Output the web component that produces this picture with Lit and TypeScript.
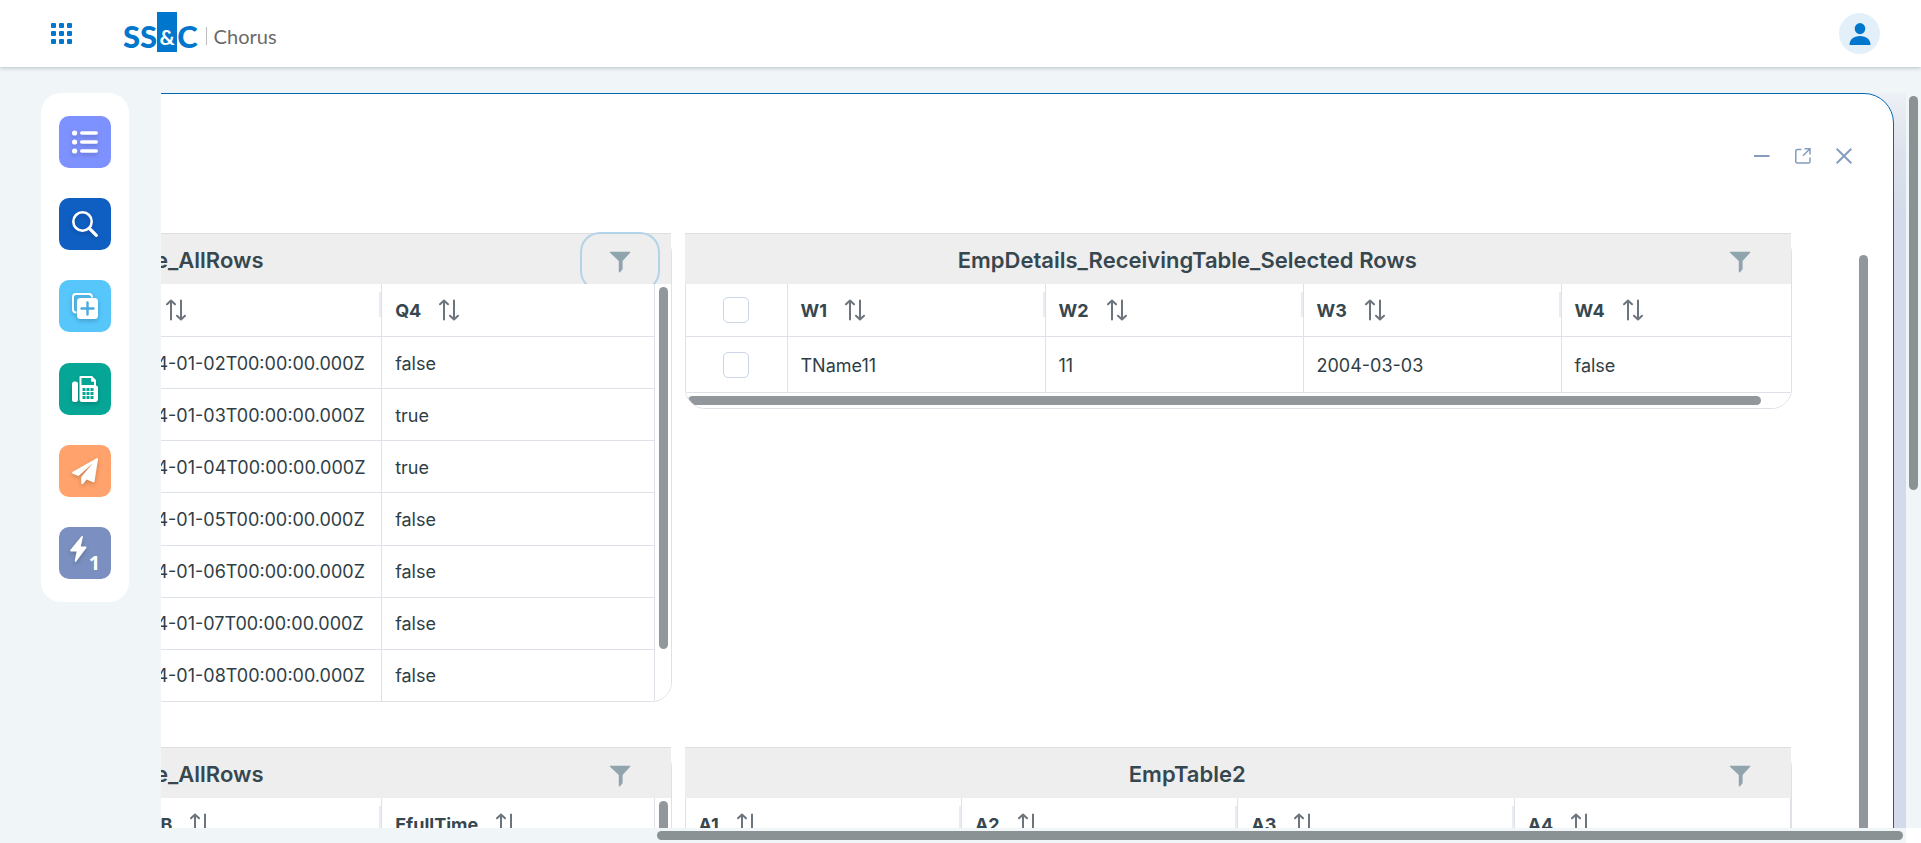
import { LitElement, html, svg, css, nothing } from "lit";
import { customElement, property } from "lit/decorators.js";

interface GridData {
  title: string;
  columns: string[];
  rows: string[][];
  selectable?: boolean;
  focused?: boolean;
  vertical?: boolean;
  horizontal?: boolean;
  offset?: boolean;
}

const stamp = (day: number) => `2004-01-0${day}T00:00:00.000Z`;

const GRIDS: GridData[] = [
  {
    title: "Table_AllRows",
    columns: ["Q1", "Q2", "Q3", "Q4"],
    rows: [
      ["Name2", "2", stamp(2), "false"],
      ["Name3", "3", stamp(3), "true"],
      ["Name4", "4", stamp(4), "true"],
      ["Name5", "5", stamp(5), "false"],
      ["Name6", "6", stamp(6), "false"],
      ["Name7", "7", stamp(7), "false"],
      ["Name8", "8", stamp(8), "false"],
    ],
    focused: true,
    vertical: true,
    offset: true,
  },
  {
    title: "EmpDetails_ReceivingTable_Selected Rows",
    columns: ["W1", "W2", "W3", "W4"],
    rows: [["TName11", "11", "2004-03-03", "false"]],
    selectable: true,
    horizontal: true,
  },
  {
    title: "Table_AllRows",
    columns: ["EName", "EId", "EDOB", "EfullTime"],
    rows: [],
    vertical: true,
    offset: true,
  },
  {
    title: "EmpTable2",
    columns: ["A1", "A2", "A3", "A4"],
    rows: [],
  },
];

@customElement("data-grid")
export class DataGrid extends LitElement {
  @property({ attribute: false }) data!: GridData;

  static styles = css`
    :host {
      display: block;
      min-width: 0;
    }
    .card {
      border: 1px solid #dfe1e6;
      border-radius: 20px;
      box-sizing: border-box;
    }
    .bar {
      display: grid;
      grid-template-columns: minmax(0, 1fr) auto;
      align-items: start;
      height: 50px;
      margin: -1px 0 0 -1px;
      border-top: 1px solid #dcdee0;
      background: #eee;
    }
    .title {
      margin: 0;
      text-align: center;
      font-size: 22px;
      font-weight: 600;
      line-height: 52px;
      white-space: nowrap;
      color: #37474f;
    }
    .title.offset {
      display: flex;
      justify-content: flex-end;
      padding-right: 306px;
    }
    .filter {
      display: grid;
      place-items: center;
      width: 76px;
      height: 55px;
      margin: 0 13px 0 12px;
      padding: 0;
      border: 0;
      border-radius: 18px;
      background: none;
    }
    .filter.focused {
      box-shadow: 0 0 0 2px #b2d3e8;
    }
    .scroll {
      position: relative;
      display: flex;
      overflow: hidden;
      background: #fff;
      border-radius: 0 0 19px 19px;
    }
    .scroll.tall {
      height: 417px;
    }
    .scroll.stacked {
      flex-direction: column;
    }
    table {
      flex: 1;
      align-self: flex-start;
      table-layout: fixed;
      width: 100%;
      border-spacing: 0;
      font-size: 18px;
      color: #2f3e46;
    }
    .tall.filled table {
      height: 418px;
    }
    .stacked table {
      flex: none;
      width: 1134px;
    }
    th,
    td {
      box-sizing: border-box;
      height: 52px;
      padding: 0 13px;
      border: 0 solid #dee1e7;
      border-width: 0 1px 1px 0;
      text-align: left;
      white-space: nowrap;
    }
    td {
      padding-top: 1px;
    }
    .stacked td {
      height: 56px;
    }
    th {
      height: 53px;
      padding-right: 0;
      color: #37474f;
      font-weight: 700;
    }
    .pick {
      width: 102px;
      padding: 0;
      text-align: center;
    }
    .head {
      display: flex;
      align-items: center;
    }
    .sort {
      display: flex;
      margin-left: 18px;
      padding: 0;
      border: 0;
      background: none;
    }
    .grip {
      width: 2px;
      height: 25px;
      margin: -12px 0 0 auto;
      background: #e9edf3;
    }
    th:last-child .grip {
      display: none;
    }
    input {
      appearance: none;
      display: block;
      box-sizing: border-box;
      width: 26px;
      height: 26px;
      margin: 0 auto;
      border: 1px solid #ccd5e8;
      border-radius: 5px;
      background: #fff;
    }
    .vtrack {
      flex: none;
      width: 9px;
      padding: 3px 3px 0 4px;
    }
    .vthumb {
      height: 362px;
      border-radius: 5px;
      background: #91979b;
    }
    .htrack {
      padding: 3px 2px;
    }
    .hthumb {
      width: 1073px;
      height: 9px;
      border-radius: 5px;
      background: #91979b;
    }
  `;

  render() {
    const d = this.data;
    const scroll = [
      "scroll",
      d.vertical || !d.rows.length ? "tall" : "",
      d.rows.length ? "filled" : "",
      d.horizontal ? "stacked" : "",
    ].join(" ");
    return html`<section class="card">
      <header class="bar">
        <h2 class="title ${d.offset ? "offset" : ""}">${d.title}</h2>
        <button class="filter ${d.focused ? "focused" : ""}" aria-label="Filter">
          <svg width="22" height="22" viewBox="0 0 22 22" fill="#90a4ae">
            <path d="M1.4 0.8h19.4c.5 0 .7.5.3.9L13.6 10v8.2l-2.6 3c-.4.4-1.2.2-1.2-.4V10L1 1.7c-.4-.4-.1-.9.4-.9z" />
          </svg>
        </button>
      </header>
      <div class=${scroll}>
        <table>
          <thead>
            <tr>
              ${d.selectable
                ? html`<th class="pick"><input type="checkbox" aria-label="Select all rows" /></th>`
                : nothing}
              ${d.columns.map(
                (c) => html`<th>
                  <div class="head">
                    ${c}
                    <button class="sort" aria-label="Sort by ${c}">
                      <svg width="20" height="22" viewBox="0 0 20 22" fill="none" stroke="#6c757d" stroke-width="2" stroke-linecap="round" stroke-linejoin="round">
                        <path d="M5 20.5V1.8M1 5.2L5 1.5l4 3.7M15 1.5v18.7M11 16.8l4 3.7 4-3.7" />
                      </svg>
                    </button>
                    <span class="grip"></span>
                  </div>
                </th>`
              )}
            </tr>
          </thead>
          <tbody>
            ${d.rows.map(
              (r) => html`<tr>
                ${d.selectable
                  ? html`<td class="pick"><input type="checkbox" aria-label="Select ${r[0]}" /></td>`
                  : nothing}
                ${r.map((v) => html`<td>${v}</td>`)}
              </tr>`
            )}
          </tbody>
        </table>
        ${d.vertical ? html`<div class="vtrack"><div class="vthumb"></div></div>` : nothing}
        ${d.horizontal ? html`<div class="htrack"><div class="hthumb"></div></div>` : nothing}
      </div>
    </section>`;
  }
}

const TOOLS = [
  {
    label: "Work list",
    tone: "list",
    icon: svg`<g fill="#fff"><circle cx="2.6" cy="4" r="2.6"/><circle cx="2.6" cy="13" r="2.6"/><circle cx="2.6" cy="22" r="2.6"/><rect x="8" y="2.2" width="18" height="3.6" rx="1.8"/><rect x="8" y="11.2" width="18" height="3.6" rx="1.8"/><rect x="8" y="20.2" width="18" height="3.6" rx="1.8"/></g>`,
  },
  {
    label: "Search",
    tone: "search",
    icon: svg`<g fill="none" stroke="#fff" stroke-width="2.6" stroke-linecap="round"><circle cx="10.5" cy="10.5" r="9.2"/><path d="M17.5 17.5l6.8 6.8" stroke-width="3.2"/></g>`,
  },
  {
    label: "Create",
    tone: "create",
    icon: svg`<path d="M4.5 19.5C2 19.5 1 18.3 1 16.5V4C1 2 2 1 4 1h13c2 0 3 1 3 3.5" fill="none" stroke="#fff" stroke-width="2"/><path d="M3 17.5V4.5C3 3.5 3.5 3 4.5 3H18.500L18.500 8 8 18z" fill="#52b2e4"/><rect x="5" y="5" width="21" height="21" rx="3.5" fill="#fff"/><path d="M15.5 9.500v12M9.500 15.500h12" stroke="#4ba9dd" stroke-width="2.400" stroke-linecap="round"/>`,
  },
  {
    label: "Fax",
    tone: "fax",
    icon: svg`<rect x="0" y="5.500" width="6" height="20.500" rx="2.500" fill="#fff"/><path d="M7.500 0.800C7.500 0.300 7.800 0 8.300 0H20l4 4v5.500c1.300.300 2 1.200 2 2.500v11c0 2-1 3-3 3H10c-1.700 0-2.500-1-2.500-2.500z" fill="#fff"/><path d="M9.500 2h9.500v2.500c0 .800.500 1.200 1.200 1.200H22V9H9.500z" fill="#06a697"/><g fill="#06a697"><rect x="10.500" y="12" width="3" height="3"/><rect x="14.500" y="12" width="3" height="3"/><rect x="18.500" y="12" width="3" height="3"/><rect x="10.500" y="16" width="3" height="3"/><rect x="14.500" y="16" width="3" height="3"/><rect x="18.500" y="16" width="3" height="3"/><rect x="10.500" y="20" width="3" height="3"/><rect x="14.500" y="20" width="3" height="3"/><rect x="18.500" y="20" width="3" height="3"/></g>`,
  },
  {
    label: "Send",
    tone: "send",
    icon: svg`<path d="M24.700.2L.7 13.800c-.9.500-.9 1.500 0 1.900l5.800 2.300L20.800 5.200 9.200 19v6c0 1.200 1.300 1.500 2 .7l3.400-4.100 6.500 2.700c.7.300 1.300-.1 1.400-.8L26 1.300c.1-.9-.5-1.500-1.300-1.100z" fill="#fff"/>`,
  },
];

@customElement("app-root")
export class AppRoot extends LitElement {
  static styles = css`
    :host {
      display: grid;
      grid-template-rows: 67px 1fr;
      height: 100vh;
      overflow: hidden;
      background: #f0f5f8;
      font-family: Inter, "Open Sans", sans-serif;
    }
    .top {
      z-index: 1;
      display: flex;
      align-items: center;
      padding: 0 41px 0 51px;
      background: #fff;
      box-shadow: 0 1px 4px rgba(60, 75, 90, 0.3);
    }
    button {
      padding: 0;
      border: 0;
      background: none;
    }
    .apps,
    .apps svg {
      display: block;
    }
    .brand {
      display: flex;
      align-items: center;
      margin-left: 51px;
      height: 67px;
      font-family: Lato, sans-serif;
      color: #0077cc;
      text-decoration: none;
    }
    .mark {
      display: flex;
      font-size: 31px;
      font-weight: 900;
      line-height: 49px;
      height: 40px;
      margin-bottom: 3px;
    }
    .amp {
      width: 20px;
      background: #0077cc;
      color: #fff;
      font-size: 21px;
      font-weight: 700;
      line-height: 49px;
      text-align: center;
    }
    .product {
      margin: 5px 0 0 8px;
      padding-left: 7px;
      border-left: 1px solid #bbb;
      font-size: 20px;
      line-height: 18px;
      color: #6a6a6a;
    }
    .user {
      display: grid;
      place-items: center;
      width: 41px;
      height: 41px;
      margin-left: auto;
      border-radius: 50%;
      background: #e3f0f9;
    }
    .body {
      display: grid;
      grid-template-columns: 161px minmax(0, 1fr) 15px;
      grid-template-rows: minmax(0, 1fr) 15px;
      padding-top: 26px;
      min-height: 0;
    }
    .tools {
      display: flex;
      flex-direction: column;
      justify-content: space-between;
      align-self: start;
      align-items: center;
      box-sizing: border-box;
      width: 88px;
      min-height: 509px;
      margin-left: 41px;
      padding: 23px 0;
      border-radius: 20px;
      background: #fff;
    }
    .tool {
      display: grid;
      place-items: center;
      width: 52px;
      height: 52px;
      border-radius: 10px;
    }
    .tool svg {
      overflow: visible;
      filter: drop-shadow(0 2px 2px rgba(0, 0, 0, 0.2));
    }
    .list { background: #7e92ff; }
    .search { background: #0f5fc2; }
    .create { background: #56c6fb; }
    .fax { background: #06a697; }
    .send { background: #ffa26b; }
    .quick {
      display: flex;
      align-items: flex-start;
      justify-content: center;
      gap: 2px;
      background: #7b90c0;
      color: #fff;
      font: 700 20px/20px "Noto Sans", sans-serif;
    }
    .quick svg { margin-top: 9px; }
    .count { margin-top: 26px; }
    .view {
      display: flex;
      justify-content: flex-end;
      overflow: hidden;
      padding-right: 12px;
      background: linear-gradient(#edf0f5, #dce1ec 60px, #d4dae9 120px);
    }
    .panel {
      flex: none;
      box-sizing: border-box;
      width: calc(100% + 628px);
      height: 1200px;
      padding: 0 25px 0 30px;
      border: 1px solid #0068b0;
      border-radius: 30px;
      background: #fff;
    }
    .controls {
      display: flex;
      justify-content: flex-end;
      align-items: center;
      gap: 25px;
      height: 123px;
      padding-right: 16px;
      margin-bottom: 16px;
    }
    .controls svg,
    .controls button {
      display: block;
    }
    .content {
      display: flex;
    }
    .grids {
      flex: 1;
      display: grid;
      grid-template-columns: repeat(2, minmax(0, 1fr));
      align-items: start;
      gap: 45px 13px;
      margin-right: 67px;
    }
    .inner {
      width: 9px;
      height: 700px;
      margin-top: 22px;
      border-radius: 5px;
      background: #91979b;
    }
    .vbar {
      padding: 3px;
    }
    .vbar div {
      height: 54%;
      border-radius: 5px;
      background: #8a9294;
    }
    .hbar {
      grid-column: 1 / 3;
      display: grid;
      grid-template-columns: minmax(0, 1fr);
      justify-items: end;
      padding: 3px 3px 3px 161px;
    }
    .hbar div {
      width: 71.5%;
      height: 9px;
      border-radius: 5px;
      background: #8a9294;
    }
    .corner {
      background: #fff;
    }
  `;

  render() {
    return html`
      <header class="top">
        <button class="apps" aria-label="Applications">
          <svg width="21" height="21" viewBox="0 0 21 21" fill="#0077cc">
            ${[0, 8, 16].map((y) => [0, 8, 16].map((x) => svg`<rect x=${x} y=${y} width="5" height="5" rx="1"/>`))}
          </svg>
        </button>
        <a class="brand" href="#">
          <span class="mark"><span>SS</span><span class="amp">&amp;</span><span>C</span></span>
          <span class="product">Chorus</span>
        </a>
        <button class="user" aria-label="Account">
          <svg width="22" height="22" viewBox="0 0 22 22" fill="#0077cc">
            <ellipse cx="11" cy="5.600" rx="5.300" ry="5.600" />
            <path d="M.5 22C.5 16.500 4.500 13 11 13s10.500 3.500 10.500 9z" />
          </svg>
        </button>
      </header>
      <div class="body">
        <nav class="tools" aria-label="Tools">
          ${TOOLS.map(
            (t) => html`<button class="tool ${t.tone}" aria-label=${t.label}>
              <svg width="26" height="26" viewBox="0 0 26 26">${t.icon}</svg>
            </button>`
          )}
          <button class="tool quick" aria-label="Quick actions, 1">
            <svg width="17" height="26" viewBox="0 0 17 26" fill="#fff">
              <path d="M11.500.300L.3 14c-.5.700-.1 1.400.7 1.400h5.600L4.700 24.800c-.2 1.100.9 1.500 1.500.6L16.300 11.900c.5-.7.100-1.400-.7-1.400h-4.800L12.900 1c.2-1-.8-1.400-1.400-.7z" />
            </svg>
            <span class="count">1</span>
          </button>
        </nav>
        <main class="view">
          <section class="panel">
            <div class="controls">
              <button aria-label="Minimize">
                <svg width="16" height="16" viewBox="0 0 16 16"><path d="M0 8h15.500" stroke="#849dbd" stroke-width="2" /></svg>
              </button>
              <button aria-label="Open in new window">
                <svg width="16" height="16" viewBox="0 0 16 16" fill="none" stroke="#849dbd" stroke-width="1.500">
                  <path d="M6.500 1.500H2.200C1.300 1.500.8 2 .8 2.800v11c0 .8.500 1.300 1.400 1.300h11.500c.8 0 1.300-.5 1.300-1.300V9.500M9.500.8H15V6.500M15 .8L8 7.800" />
                </svg>
              </button>
              <button aria-label="Close">
                <svg width="16" height="16" viewBox="0 0 16 16"><path d="M.7.7l14.600 14.600M15.300.7L.7 15.300" stroke="#849dbd" stroke-width="2" /></svg>
              </button>
            </div>
            <div class="content">
              <div class="grids">${GRIDS.map((g) => html`<data-grid .data=${g}></data-grid>`)}</div>
              <div class="inner"></div>
            </div>
          </section>
        </main>
        <div class="vbar"><div></div></div>
        <div class="hbar"><div></div></div>
        <div class="corner"></div>
      </div>
    `;
  }
}
